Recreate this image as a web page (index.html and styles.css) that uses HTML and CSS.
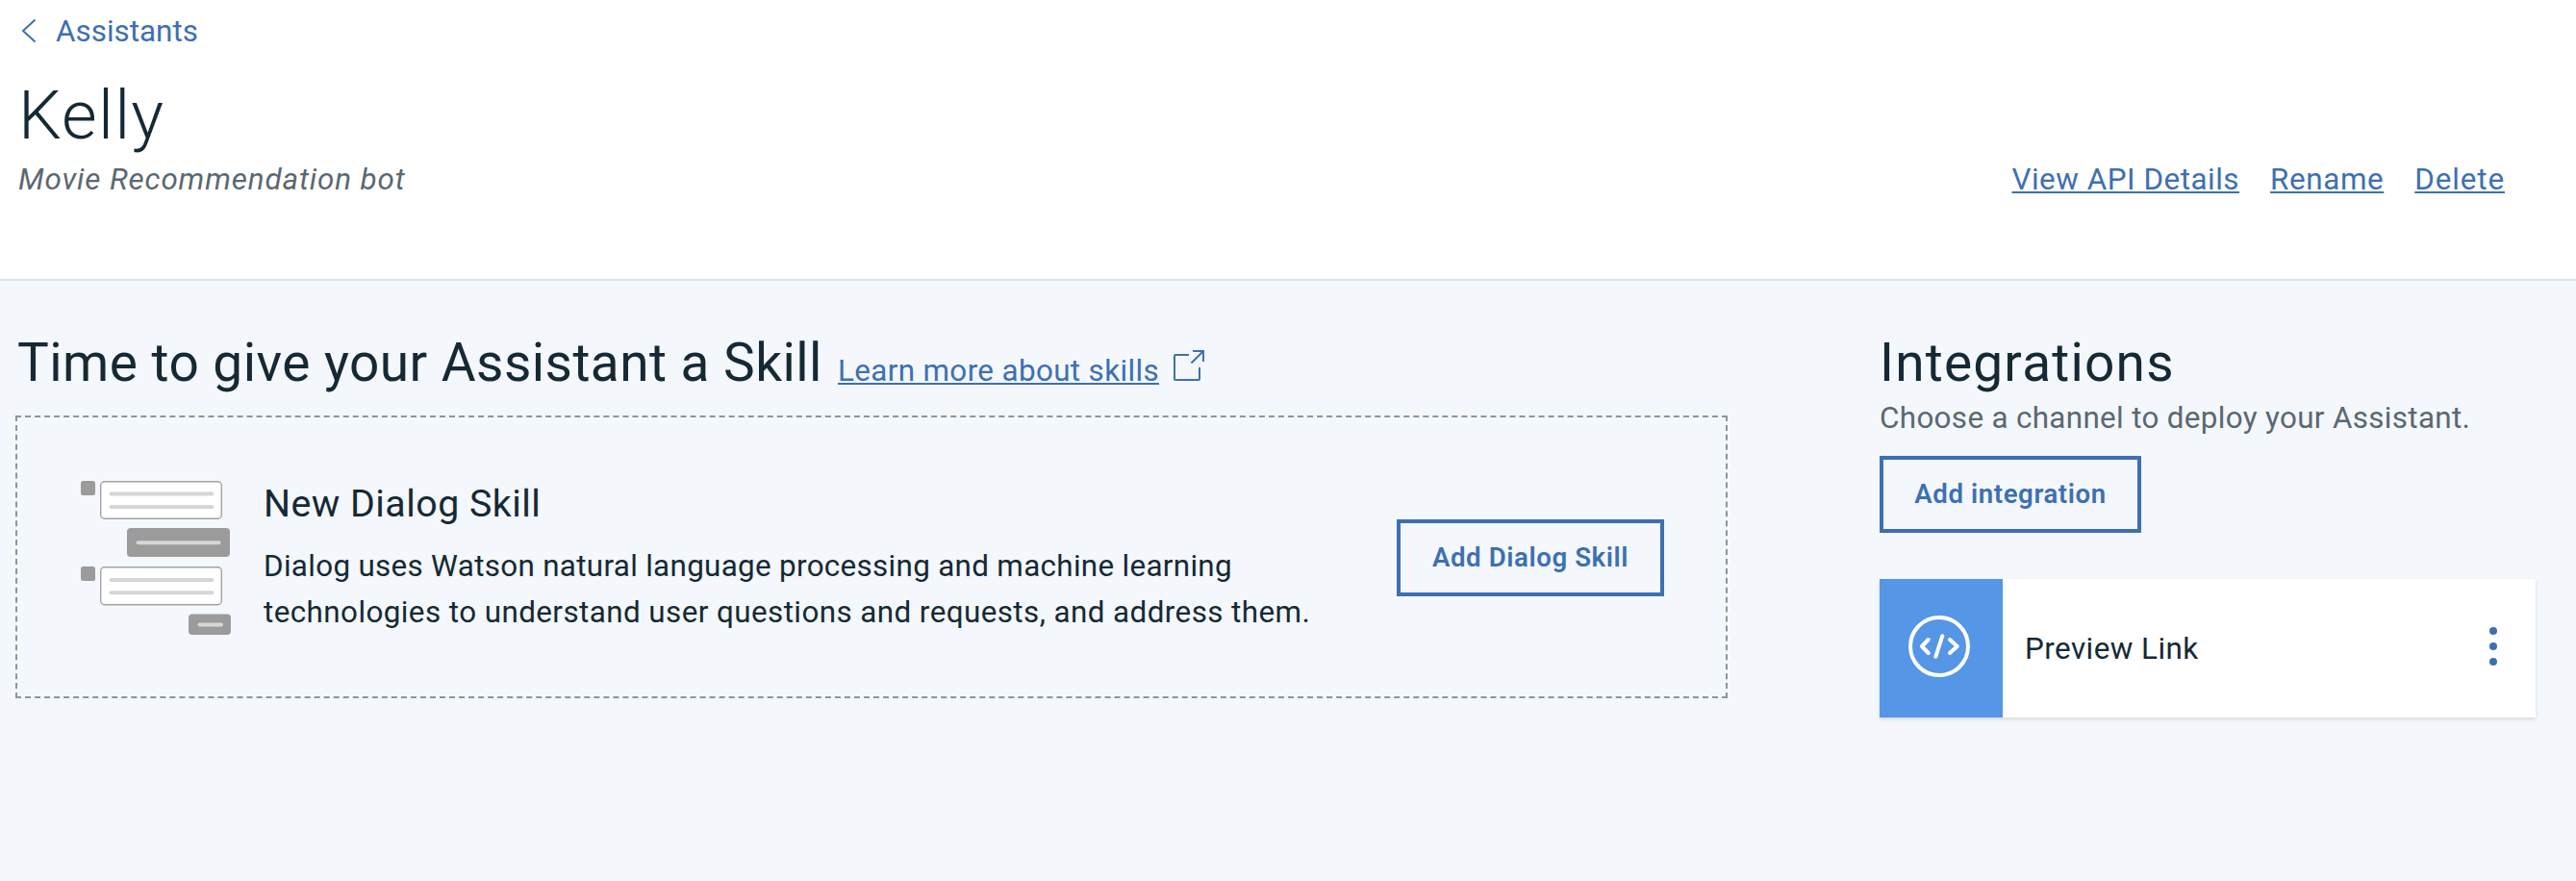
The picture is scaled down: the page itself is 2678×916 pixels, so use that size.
FILE: index.html
```html
<!DOCTYPE html>
<html lang="en">
<head>
<meta charset="utf-8">
<title>Kelly</title>
<link rel="stylesheet" href="styles.css">
</head>
<body>
<header class="header">
  <a class="back"><svg class="chevron" width="16" height="26" viewBox="0 0 16 26"><path d="M14.500 1.500 2 13l12.500 11.500"/></svg><span>Assistants</span></a>
  <h1 class="name">Kelly</h1>
  <div class="meta">
    <p class="desc">Movie Recommendation bot</p>
    <nav class="actions"><a class="link view">View API Details</a><a class="link rename">Rename</a><a class="link delete">Delete</a></nav>
  </div>
</header>
<main class="main">
  <section class="skills">
    <div class="heading-row">
      <h2 class="heading">Time to give your Assistant a Skill</h2>
      <a class="link learn">Learn more about skills</a>
      <svg class="external" width="34" height="34" viewBox="0 0 34 34"><path d="M17 7H3Q2 7 2 8V32Q2 33 3 33H27Q28 33 28 32V20M21 3H32V14M32 3 19.500 15.500"/></svg>
    </div>
    <div class="skill-box">
      <svg class="art" width="158" height="162" viewBox="0 0 158 162">
        <g class="art-solid"><rect x="0" y="0" width="15" height="15" rx="2.500"/><rect x="0" y="89" width="15" height="15" rx="2.500"/><rect x="48" y="49" width="107" height="30" rx="4"/><rect x="112" y="138.500" width="44" height="21.500" rx="4"/></g>
        <g class="art-card"><rect x="20.700" y=".7" width="125.600" height="38.600" rx="4"/><rect x="20.700" y="89.700" width="125.600" height="39" rx="4"/></g>
        <path class="art-line" d="M31.500 13.500h105M31.500 27h105M59.500 64.200h84M31.500 103h105M31.500 116.200h105M123.500 149.500h22.500"/>
      </svg>
      <div class="skill-text">
        <h3 class="skill-title">New Dialog Skill</h3>
        <p class="skill-desc"><span class="line-first">Dialog uses Watson natural language processing and machine learning</span><br>technologies to understand user questions and requests, and address them.</p>
      </div>
      <button class="btn btn-skill">Add Dialog Skill</button>
    </div>
  </section>
  <aside class="integrations">
    <h2 class="heading int-heading">Integrations</h2>
    <p class="int-desc">Choose a channel to deploy your Assistant.</p>
    <button class="btn btn-int">Add integration</button>
    <div class="card">
      <div class="card-icon"><svg width="64" height="64" viewBox="0 0 64 64"><circle cx="32" cy="32" r="30"/><path d="M20.700 25 14 32l6.700 7M43 25l7.700 7-7.700 7M35.300 21.200 28.300 42.800"/></svg></div>
      <span class="card-name">Preview Link</span>
      <svg class="dots" width="8" height="40" viewBox="0 0 8 40"><circle cx="4" cy="4" r="4"/><circle cx="4" cy="20" r="4"/><circle cx="4" cy="36" r="4"/></svg>
    </div>
  </aside>
</main>
</body>
</html>
```
FILE: styles.css
```css
* { box-sizing: border-box; margin: 0; padding: 0; }
body { width: 2678px; height: 916px; overflow: hidden; background: #f4f7fb; color: #152935; font-family: Roboto, "Liberation Sans", sans-serif; font-size: 31.4px; }
.header { height: 292px; padding: 13px 74px 0 19px; background: #fff; border-bottom: 2px solid #dfe3e6; }
.back { display: flex; align-items: center; height: 40px; line-height: 40px; color: #3d70b2; }
.chevron { margin: -2px 20px 0 3px; fill: none; stroke: #3d70b2; stroke-width: 2; }
.name { margin-top: 27px; font-size: 71px; line-height: 80px; font-weight: 300; letter-spacing: 1.2px; }
.meta { display: flex; justify-content: space-between; margin-top: 7px; line-height: 40px; }
.desc { font-style: italic; color: #5a6872; letter-spacing: .87px; }
.actions { display: flex; gap: 32px; }
.view { letter-spacing: .52px; }
.rename { letter-spacing: .6px; }
.delete { letter-spacing: .88px; }
.link { color: #3d70b2; text-decoration: underline; text-decoration-thickness: 2px; text-underline-offset: 2px; text-decoration-skip-ink: none; }
.main { display: flex; justify-content: space-between; padding: 53px 42px 0 16px; }
.skills { width: 1780px; }
.heading-row { display: flex; align-items: baseline; height: 64px; margin-bottom: 23px; padding-left: 2px; }
.heading { font-size: 55px; line-height: 64px; font-weight: 400; white-space: nowrap; letter-spacing: .45px; }
.learn { margin-left: 16px; letter-spacing: .36px; }
.external { margin-left: 14px; fill: none; stroke: #3d70b2; stroke-width: 2; }
.skill-box { display: flex; height: 294px; padding: 66px 64px 0 66px; border: 2px dashed #8897a2; }
.art { flex: none; }
.art-solid { fill: #9b9b9b; }
.art-card { fill: #fff; stroke: #a3a3a3; stroke-width: 1.4; }
.art-line { fill: none; stroke: #d6d6d6; stroke-width: 4; stroke-linecap: round; }
.skill-text { margin-left: 32px; flex: 1; }
.skill-title { font-size: 39.3px; line-height: 48px; font-weight: 400; margin-bottom: 17px; letter-spacing: .48px; }
.skill-desc { line-height: 48px; white-space: nowrap; letter-spacing: .42px; }
.line-first { letter-spacing: .31px; }
.btn { display: block; height: 80px; border: 4px solid #3d70b2; background: transparent; color: #3d70b2; font: 600 27.6px/72px Roboto, "Liberation Sans", sans-serif; letter-spacing: .6px; }
.btn-skill { width: 278px; margin-top: 40px; }
.integrations { width: 682px; }
.int-heading { letter-spacing: 1.2px; }
.int-desc { margin-top: 6px; line-height: 40px; color: #5a6872; letter-spacing: .33px; }
.btn-int { width: 272px; margin-top: 19px; }
.card { display: flex; align-items: center; height: 144px; margin-top: 48px; padding-right: 40px; background: #fff; box-shadow: 0 2px 4px rgba(0,0,0,.12); }
.card-icon { display: flex; align-items: center; justify-content: center; width: 128px; height: 144px; padding: 0 4px 4px 0; background: #5596e6; fill: none; stroke: #fff; stroke-width: 4; stroke-linecap: round; stroke-linejoin: round; }
.card-name { flex: 1; margin-left: 23px; letter-spacing: .45px; }
.dots { margin-bottom: 4px; fill: #3d70b2; }
```
